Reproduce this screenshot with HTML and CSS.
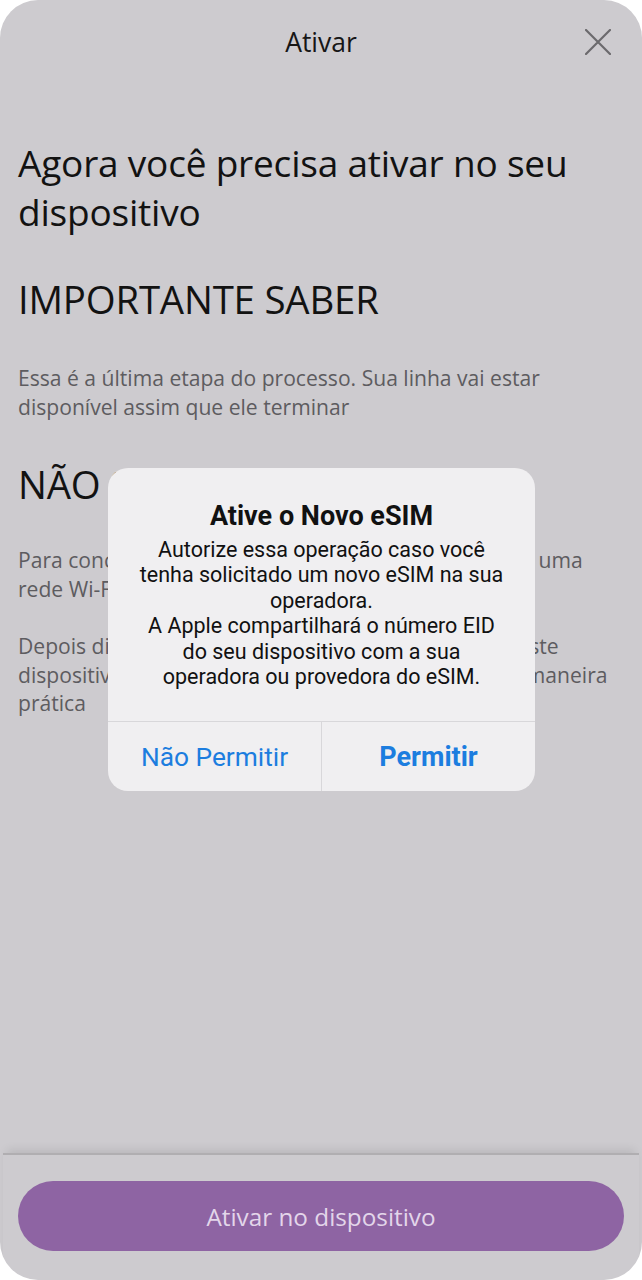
FILE: index.html
```html
<!DOCTYPE html>
<html lang="pt-BR">
<head>
<meta charset="utf-8">
<title>Ativar</title>
<link rel="stylesheet" href="styles.css">
</head>
<body>
<div class="screen">
  <header class="topbar">
    <span class="topbar-title">Ativar</span>
    <button class="close" aria-label="Fechar">
      <svg width="26" height="26" viewBox="0 0 26 26"><path d="M1 1 L25 25 M25 1 L1 25" stroke="#6b6a6d" stroke-width="2.2" stroke-linecap="round" fill="none"/></svg>
    </button>
  </header>
  <main class="content">
    <h1 class="headline">Agora você precisa ativar no seu dispositivo</h1>
    <h2 class="section-title">IMPORTANTE SABER</h2>
    <p class="text t1">Essa é a última etapa do processo. Sua linha vai estar<br>disponível assim que ele terminar</p>
    <h2 class="section-title">NÃO SAIA DESTA TELA</h2>
    <p class="text t2">Para concluir, mantenha o seu celular conectado em uma<br>rede Wi-Fi ou a uma rede de dados móveis</p>
    <p class="text t3">Depois disso, você já poderá usar sua nova linha, neste<br>dispositivo e aproveitar todos os benefícios dela de maneira<br>prática</p>
  </main>
  <footer class="footer">
    <button class="primary">Ativar no dispositivo</button>
  </footer>

  <div class="alert" role="alertdialog">
    <div class="alert-body">
      <div class="alert-title">Ative o Novo eSIM</div>
      <div class="alert-msg">Autorize essa operação caso você<br>tenha solicitado um novo eSIM na sua<br>operadora.<br>A Apple compartilhará o número EID<br>do seu dispositivo com a sua<br>operadora ou provedora do eSIM.</div>
    </div>
    <div class="alert-actions">
      <button class="alert-btn">Não Permitir</button>
      <button class="alert-btn alert-btn-strong">Permitir</button>
    </div>
  </div>
</div>
</body>
</html>
```

FILE: styles.css
```css
* { box-sizing: border-box; }
html, body { margin: 0; padding: 0; background: #ffffff; }
body { width: 642px; height: 1280px; }

.screen {
  position: relative;
  width: 642px;
  height: 1280px;
  background: #cdcbcf;
  border-radius: 38px;
  overflow: hidden;
  display: flex;
  flex-direction: column;
  font-family: "Open Sans", "Noto Sans", sans-serif;
  color: #121212;
}

.topbar {
  height: 86px;
  display: flex;
  align-items: center;
  justify-content: center;
  position: relative;
}
.topbar-title {
  font-size: 26.5px;
  line-height: 32px;
  margin-top: -2px;
  color: #161616;
}
.close {
  position: absolute;
  right: 31px;
  top: 29px;
  width: 26px;
  height: 26px;
  padding: 0;
  border: 0;
  background: transparent;
  display: flex;
}

.content {
  flex: 1;
  padding: 52px 18px 0 18px;
}
.headline {
  margin: 0;
  font-weight: 400;
  font-size: 37px;
  line-height: 49px;
  letter-spacing: -0.2px;
}
.section-title {
  margin: 39px 0 0 0;
  font-weight: 400;
  font-size: 38.4px;
  line-height: 49px;
  letter-spacing: -0.2px;
}
.text {
  margin: 0;
  font-size: 21.1px;
  line-height: 28.5px;
  color: #5d5c60;
  white-space: nowrap;
}
.t1 { margin-top: 40px; }
.t2 { margin-top: 37px; }
.t3 { margin-top: 29px; }

.footer {
  border-top: 2px solid #b0aeb1;
  box-shadow: 0 -7px 9px -4px rgba(0, 0, 0, 0.10);
  padding: 26px 18px 29px 18px;
  margin: 0 3px;
}
.primary {
  display: block;
  width: 606px;
  margin-left: -3px;
  height: 70px;
  border: 0;
  border-radius: 35px;
  background: #8e64a3;
  color: #e3d6ea;
  font-family: "Open Sans", "Noto Sans", sans-serif;
  font-size: 24.3px;
}

.alert {
  position: absolute;
  left: 108px;
  top: 468px;
  width: 427px;
  background: #f0eff1;
  border-radius: 20px;
  font-family: Roboto, "Liberation Sans", sans-serif;
  color: #111;
  text-align: center;
}
.alert-body {
  padding: 32px 10px 32px 10px;
}
.alert-title {
  font-weight: 700;
  font-size: 27px;
  line-height: 32px;
}
.alert-msg {
  margin-top: 5px;
  font-size: 21.5px;
  line-height: 25.4px;
  white-space: nowrap;
}
.alert-actions {
  display: flex;
  border-top: 1px solid #d8d7da;
  height: 70px;
}
.alert-btn {
  flex: 1;
  border: 0;
  background: transparent;
  font-family: Roboto, "Liberation Sans", sans-serif;
  font-size: 26.3px;
  color: #1c7ddf;
  padding: 0;
}
.alert-btn + .alert-btn { border-left: 1px solid #d8d7da; }
.alert-btn-strong { font-weight: 700; font-size: 27px; }
```
